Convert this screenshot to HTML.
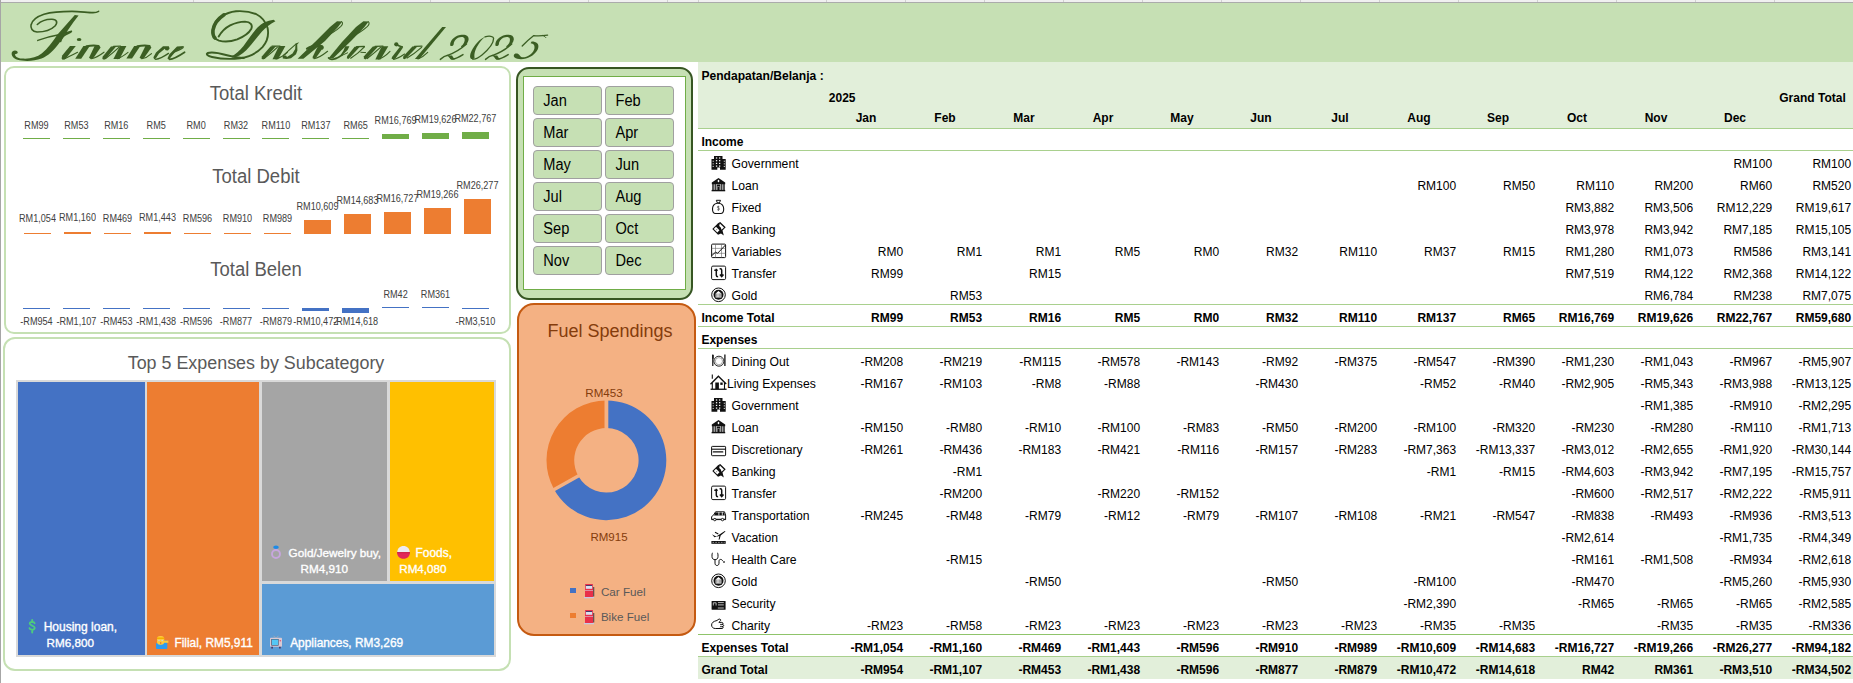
<!DOCTYPE html>
<html><head><meta charset="utf-8"><style>
html,body{margin:0;padding:0;background:#fff;}
body{width:1853px;height:683px;position:relative;overflow:hidden;font-family:"Liberation Sans", sans-serif;}
.t{position:absolute;white-space:nowrap;}
.r{position:absolute;box-sizing:border-box;}
svg{position:absolute;}
</style></head><body>
<div class="r" style="left:0px;top:0px;width:1853px;height:2px;background:#F0F0F0;"></div><div class="r" style="left:0px;top:2px;width:1853px;height:1px;background:#ABABAB;"></div><div class="r" style="left:193px;top:0px;width:1px;height:2px;background:#D0D0D0;"></div><div class="r" style="left:272px;top:0px;width:1px;height:2px;background:#D0D0D0;"></div><div class="r" style="left:351px;top:0px;width:1px;height:2px;background:#D0D0D0;"></div><div class="r" style="left:430px;top:0px;width:1px;height:2px;background:#D0D0D0;"></div><div class="r" style="left:509px;top:0px;width:1px;height:2px;background:#D0D0D0;"></div><div class="r" style="left:588px;top:0px;width:1px;height:2px;background:#D0D0D0;"></div><div class="r" style="left:667px;top:0px;width:1px;height:2px;background:#D0D0D0;"></div><div class="r" style="left:698px;top:0px;width:1px;height:2px;background:#D0D0D0;"></div><div class="r" style="left:826px;top:0px;width:1px;height:2px;background:#D0D0D0;"></div><div class="r" style="left:905px;top:0px;width:1px;height:2px;background:#D0D0D0;"></div><div class="r" style="left:984px;top:0px;width:1px;height:2px;background:#D0D0D0;"></div><div class="r" style="left:1063px;top:0px;width:1px;height:2px;background:#D0D0D0;"></div><div class="r" style="left:1142px;top:0px;width:1px;height:2px;background:#D0D0D0;"></div><div class="r" style="left:1221px;top:0px;width:1px;height:2px;background:#D0D0D0;"></div><div class="r" style="left:1300px;top:0px;width:1px;height:2px;background:#D0D0D0;"></div><div class="r" style="left:1379px;top:0px;width:1px;height:2px;background:#D0D0D0;"></div><div class="r" style="left:1458px;top:0px;width:1px;height:2px;background:#D0D0D0;"></div><div class="r" style="left:1537px;top:0px;width:1px;height:2px;background:#D0D0D0;"></div><div class="r" style="left:1616px;top:0px;width:1px;height:2px;background:#D0D0D0;"></div><div class="r" style="left:1695px;top:0px;width:1px;height:2px;background:#D0D0D0;"></div><div class="r" style="left:1774px;top:0px;width:1px;height:2px;background:#D0D0D0;"></div><div class="r" style="left:0px;top:0px;width:1px;height:683px;background:#A6A6A6;"></div><div class="r" style="left:1px;top:3px;width:1852px;height:59px;background:#C6E0B4;"></div><svg style="left:0;top:0" width="600" height="70" viewBox="0 0 600 70"><path d="M37.3 24.5C41 21 46 19 52 19.2C57 19.4 58 22.5 55 26C51 30 43 32 37 32C32 31.5 30.5 28 31 25C32 20 37 16.5 44 14.2C52 12 62 11.4 72 11.4C80 11.5 88 12.6 93 12.6C95.5 12.6 97.5 12 98.6 11.3" fill="none" stroke="#3B5E23" stroke-width="1.6" stroke-linecap="round" stroke-linejoin="round"/><path d="M74.8 15.0L78.6 15.4C72 23.5 66 33 60 42C54 50.5 48 56 41.5 58.6C34 61.3 24 61.5 17.5 59.8C13.3 58.6 11 55.6 11.8 52.6C12.5 50.3 15.8 49.8 17.4 51.4C18.4 52.6 17.2 54.2 15.2 54C14.5 56.2 17.2 58.2 22 58.6C30 59.2 36.5 57.5 42 53.3C47.5 49 52.5 42 57.5 34.6Z" fill="#3B5E23"/><path d="M37.8 40.4C44 38.3 52 36 60 34.6C65 33.6 69 31.5 71.3 31.2C72 31.6 70 33 66 34.5C63 36 61.5 38.5 60.6 41.5" fill="none" stroke="#3B5E23" stroke-width="1.5" stroke-linecap="round" stroke-linejoin="round"/><ellipse cx="79.1" cy="39.4" rx="2.3" ry="1.5" fill="#3B5E23"/><path d="M70 46.1 L75.8 46.1 L65.8 58.4 L64.4 59.6 L62.6 59.7 L61.6 58.4 L62.2 55.6Z" fill="#3B5E23"/><path d="M64.5 58.8C68 57.2 73 54.6 77.6 52.2" fill="none" stroke="#3B5E23" stroke-width="1.1" stroke-linecap="round" stroke-linejoin="round"/><path d="M83.4 46.1 L89.8 46.1 L81.2 58.7 L75.2 58.7Z" fill="#3B5E23"/><path d="M86.5 46.3C90 45.6 95 45.4 98.6 45.9" fill="none" stroke="#3B5E23" stroke-width="1.9" stroke-linecap="round" stroke-linejoin="round"/><path d="M94.6 46.0 L99.6 46.0 L100.6 47.4 L93.6 57.8 L90.8 59.0 L89.0 57.8Z" fill="#3B5E23"/><path d="M91.2 58.8C95 58 100 55.2 104 52.2" fill="none" stroke="#3B5E23" stroke-width="1.1" stroke-linecap="round" stroke-linejoin="round"/><path d="M111 46.4 L116.5 46.1 L106.2 58.2 L104.2 59.7 L102.4 59.0 L102.6 56.8Z" fill="#3B5E23"/><path d="M118.9 47.4C115 51 109.5 55.6 105.6 58.6" fill="none" stroke="#3B5E23" stroke-width="1.2" stroke-linecap="round" stroke-linejoin="round"/><path d="M113.5 46.3L120.5 46.2" fill="none" stroke="#3B5E23" stroke-width="1.3" stroke-linecap="round" stroke-linejoin="round"/><path d="M120 46.1 L126.4 46.1 L119.5 58.9 L113.4 58.9Z" fill="#3B5E23"/><path d="M117.5 58.7C121 57.6 124.5 55.2 128 52.4" fill="none" stroke="#3B5E23" stroke-width="1.1" stroke-linecap="round" stroke-linejoin="round"/><path d="M134.2 46.1 L140.3 46.1 L132 58.6 L126.4 58.6Z" fill="#3B5E23"/><path d="M137.4 46.3C141 45.6 146 45.4 149.6 45.9" fill="none" stroke="#3B5E23" stroke-width="1.9" stroke-linecap="round" stroke-linejoin="round"/><path d="M145.4 46.0 L150.4 46.0 L151.4 47.4 L144.2 57.8 L141.4 59.0 L139.6 57.8Z" fill="#3B5E23"/><path d="M141.8 58.8C145 58.2 148.5 56.4 151.5 53.6" fill="none" stroke="#3B5E23" stroke-width="1.1" stroke-linecap="round" stroke-linejoin="round"/><path d="M163 46.3 L168.8 46.2 L169.6 48.4 L168 50.4 L165.6 50.2 L164.8 48.8 L159 53.6 L155.8 58.6 L154.2 59.4 L153.4 57.2 L156 52.6Z" fill="#3B5E23"/><path d="M155.6 59.3C159 59 164 56.5 168.5 53.4" fill="none" stroke="#3B5E23" stroke-width="1.3" stroke-linecap="round" stroke-linejoin="round"/><path d="M177 46.5 L184.3 46.0 L182.6 47.6 L175.6 51.6 L170.6 57.6 L169.2 59.6 L167.4 58.4 L169.4 54.2Z" fill="#3B5E23"/><path d="M172.8 52.6C176.2 51.4 180.6 49.8 183.2 47.6" fill="none" stroke="#3B5E23" stroke-width="1.3" stroke-linecap="round" stroke-linejoin="round"/><path d="M169.4 59.3C173 59.2 179 56 184.6 52.2" fill="none" stroke="#3B5E23" stroke-width="1.7" stroke-linecap="round" stroke-linejoin="round"/><path d="M218.7 36.4C222 31 226 27.5 230.1 25.4C235 23 240.7 21.6 245 21.6C250.5 21.8 253 25 251.2 29C249 33 244 36.6 237.2 39.4C231 41.6 224 42 219 40.6C214.5 39 212.4 35.5 212.6 31.1C213 25.5 216.5 19.5 221.3 16.6C226 13.5 231 11.8 236 11.3C242 10.9 250 11.6 256 14C262 17 266 22.5 267.6 28C269 35 267 42 262.5 47.2C257 53 249 56.8 240 58.2C231 59.4 220 58.8 212 57C207.5 56 205.6 54 207.6 53C211 52 219 53 226 55C232 56.6 238 58 244 58" fill="none" stroke="#3B5E23" stroke-width="1.9" stroke-linecap="round" stroke-linejoin="round"/><path d="M224 14.8C218.5 18.5 214 24 213 30C212.6 34 213.4 36.5 215 38" fill="none" stroke="#3B5E23" stroke-width="3.6" stroke-linecap="round" stroke-linejoin="round"/><path d="M273.6 19.8L275.4 21.2C270 24 265.5 27.5 262 31.5C257 37.5 252 44 246.5 50C242 54.5 237 57.5 232.2 57.6L230.8 56.4C235 55 239.5 51 243.5 46C248 40 252.5 33 257.5 27.5C262 23 267 21 273.6 19.8Z" fill="#3B5E23"/><path d="M270.5 46.4 L276.2 46.1 L265.2 58.2 L263.2 59.6 L261.6 58.8 L261.8 56.4Z" fill="#3B5E23"/><path d="M277.3 47.4C273 51.5 268 55.6 264.4 58.4" fill="none" stroke="#3B5E23" stroke-width="1.2" stroke-linecap="round" stroke-linejoin="round"/><path d="M272 46.2L280 46.1" fill="none" stroke="#3B5E23" stroke-width="1.3" stroke-linecap="round" stroke-linejoin="round"/><path d="M279 46.1 L285.4 46.1 L278 59.3 L272.5 59.3Z" fill="#3B5E23"/><path d="M276 59C280 58 284 55.5 287.4 52.4" fill="none" stroke="#3B5E23" stroke-width="1.1" stroke-linecap="round" stroke-linejoin="round"/><path d="M295.5 43.6 L299.2 42.2 L297.2 44.6 L297.4 50.5 L296 54.2 L291 58.2 L286.5 59 L282.8 58.6 L282.6 56 L286 55.4 L287 57 L292.5 53.6 L295.2 49Z" fill="#3B5E23"/><path d="M283.5 55.5C287 52 292 47.5 295.6 44.4" fill="none" stroke="#3B5E23" stroke-width="1.1" stroke-linecap="round" stroke-linejoin="round"/><path d="M337 21.2 L342.2 21.4 L338 27 L325 41 L303.4 58.8 L297.6 58.8 L315 42 L330 27Z" fill="#3B5E23"/><path d="M341.6 21.6C343.2 22.8 342.6 24.6 340.6 26.6C336 31 328 35.5 321 38.1" fill="none" stroke="#3B5E23" stroke-width="1.1" stroke-linecap="round" stroke-linejoin="round"/><path d="M307 48.6C310.5 46.5 316 45.4 320.5 45.8C323 46.2 323.2 47.4 322.2 48.6" fill="none" stroke="#3B5E23" stroke-width="2.2" stroke-linecap="round" stroke-linejoin="round"/><path d="M318 46 L322.8 46.2 L323.2 47.6 L316.4 57.2 L314.6 58.8 L312.6 58.2 L312.8 56.4Z" fill="#3B5E23"/><path d="M314 58.7C318 58.2 323 55 327.6 51.3" fill="none" stroke="#3B5E23" stroke-width="1.1" stroke-linecap="round" stroke-linejoin="round"/><path d="M363.4 21.2 L368.6 21.4 L364.5 27 L351 41 L333.2 58.2 L328.4 58.6 L342 42 L356 27Z" fill="#3B5E23"/><path d="M368.2 21.6C369.8 22.8 369.2 24.6 367.2 26.6C362.5 31 355 35.5 347 39.5" fill="none" stroke="#3B5E23" stroke-width="1.1" stroke-linecap="round" stroke-linejoin="round"/><path d="M328.6 58C330 59.6 333 59.6 336 58.4" fill="none" stroke="#3B5E23" stroke-width="1.8" stroke-linecap="round" stroke-linejoin="round"/><path d="M345.2 46.2 L349.4 46.2 L347.6 50 L342 55.6 L340.6 55 L343.5 50.5Z" fill="#3B5E23"/><path d="M336 58.4C338.5 57.4 340.6 56 342 55" fill="none" stroke="#3B5E23" stroke-width="1.6" stroke-linecap="round" stroke-linejoin="round"/><path d="M342.4 55.2L347.6 52.8" fill="none" stroke="#3B5E23" stroke-width="1.0" stroke-linecap="round" stroke-linejoin="round"/><path d="M354.6 46.8 L360 46.4 L350 57.6 L348.4 59.0 L346.8 58.2 L347.2 56Z" fill="#3B5E23"/><path d="M356.6 46.6L364.3 46.5" fill="none" stroke="#3B5E23" stroke-width="1.4" stroke-linecap="round" stroke-linejoin="round"/><path d="M364.4 46.8C361 50.5 355 55.5 350.7 58.2" fill="none" stroke="#3B5E23" stroke-width="1.2" stroke-linecap="round" stroke-linejoin="round"/><path d="M360.8 52.3L365.6 52.6" fill="none" stroke="#3B5E23" stroke-width="1.0" stroke-linecap="round" stroke-linejoin="round"/><path d="M372.8 46.6 L378.4 46.2 L367.2 58.2 L365.4 59.4 L363.8 58.6 L364.0 56.2Z" fill="#3B5E23"/><path d="M380.5 47.4C376 51.5 371 55.6 367.2 58.5" fill="none" stroke="#3B5E23" stroke-width="1.2" stroke-linecap="round" stroke-linejoin="round"/><path d="M375 46.3L383 46.2" fill="none" stroke="#3B5E23" stroke-width="1.3" stroke-linecap="round" stroke-linejoin="round"/><path d="M381.8 46.2 L388.3 46.2 L380.5 59.4 L375.3 59.4Z" fill="#3B5E23"/><path d="M378.5 59C382 58 386.5 55 390 51.3" fill="none" stroke="#3B5E23" stroke-width="1.1" stroke-linecap="round" stroke-linejoin="round"/><circle cx="396.3" cy="44.3" r="2.1" fill="#3B5E23"/><path d="M396.5 44.8C398.5 46 400.5 46.4 402.2 46.8" fill="none" stroke="#3B5E23" stroke-width="1.6" stroke-linecap="round" stroke-linejoin="round"/><path d="M399.8 47.0 L403.2 47.2 L395.6 58.2 L393.6 59.6 L391.6 58.8 L392.0 57.0Z" fill="#3B5E23"/><path d="M393.6 59.4C397 58.8 401 56.5 404.6 54" fill="none" stroke="#3B5E23" stroke-width="1.1" stroke-linecap="round" stroke-linejoin="round"/><path d="M412.4 46.6 L417.6 46.2 L406.4 58.0 L404.6 59.2 L403.0 58.4 L403.4 56.2Z" fill="#3B5E23"/><path d="M421.6 47.4C417 51.5 411.5 55.5 407.1 58" fill="none" stroke="#3B5E23" stroke-width="1.2" stroke-linecap="round" stroke-linejoin="round"/><path d="M414.5 46.4L422 46.2" fill="none" stroke="#3B5E23" stroke-width="1.3" stroke-linecap="round" stroke-linejoin="round"/><path d="M442.2 27.1 L446 27.1 L419.4 59.1 L414.9 59.1Z" fill="#3B5E23"/><path d="M418 59C421 58 424.5 55.6 427.7 52.4" fill="none" stroke="#3B5E23" stroke-width="1.1" stroke-linecap="round" stroke-linejoin="round"/><path d="M450.2 45.6C449.6 41 454 36.2 460 35C465.5 34 469 35.6 468.6 39.5C468.2 43 465 46.2 461.5 47.2L461 46.2C463.6 44.6 465.2 41.5 464.6 38.8C464 36.6 461 36.4 458 37.8C455.5 39 453.8 41.5 453.6 44.6C453.6 46 451.2 46.6 450.2 45.6Z" fill="#3B5E23"/><path d="M466.5 44C461 49 453 53.5 447 55.6" fill="none" stroke="#3B5E23" stroke-width="1.5" stroke-linecap="round" stroke-linejoin="round"/><path d="M440.3 59.4C442.5 57.5 445 55.8 447.2 55.4C449 55.2 449.6 57 451 58.6C453 59.6 457 58.4 463 54.6" fill="none" stroke="#3B5E23" stroke-width="1.4" stroke-linecap="round" stroke-linejoin="round"/><path d="M448.8 55.6L452 55.4L454.6 59.4L451 59.6Z" fill="#3B5E23"/><path d="M485.8 36.6C480 38.5 474.5 45 471.5 51C469.6 55 469.6 58.4 471.6 59.1C473 59.5 474.4 58.6 474.6 57.6C473.8 54 475.5 48.5 479 43.5C481.5 40 484 37.8 485.8 36.6Z" fill="#3B5E23"/><path d="M485 36.8C489 35.6 493.6 36 493.6 38.6C493.6 43 488 50 482 55C478 58.2 474.6 59.4 472.6 59" fill="none" stroke="#3B5E23" stroke-width="1.3" stroke-linecap="round" stroke-linejoin="round"/><path d="M495.4 45.6C494.8 41 499.2 36.2 505.2 35C510.7 34 514.2 35.6 513.8000000000001 39.5C513.4 43 510.2 46.2 506.7 47.2L506.2 46.2C508.8 44.6 510.4 41.5 509.8 38.8C509.2 36.6 506.2 36.4 503.2 37.8C500.7 39 499.0 41.5 498.8 44.6C498.8 46 496.4 46.6 495.4 45.6Z" fill="#3B5E23"/><path d="M511.7 44C506.2 49 498.2 53.5 492.2 55.6" fill="none" stroke="#3B5E23" stroke-width="1.5" stroke-linecap="round" stroke-linejoin="round"/><path d="M485.5 59.4C487.7 57.5 490.2 55.8 492.4 55.4C494.2 55.2 494.8 57 496.2 58.6C498.2 59.6 502.2 58.4 508.2 54.6" fill="none" stroke="#3B5E23" stroke-width="1.4" stroke-linecap="round" stroke-linejoin="round"/><path d="M494.0 55.6L497.2 55.4L499.8 59.4L496.2 59.6Z" fill="#3B5E23"/><path d="M522.2 46C525.5 42.5 530 38.6 533.8 35.6C538 36.2 543 35.8 547.6 35.2" fill="none" stroke="#3B5E23" stroke-width="1.3" stroke-linecap="round" stroke-linejoin="round"/><path d="M543 35.5C544.6 36.2 545.6 37 545.8 37.6" fill="none" stroke="#3B5E23" stroke-width="1.0" stroke-linecap="round" stroke-linejoin="round"/><path d="M531.6 41.6C536.6 41.6 539.2 44 538.2 48C537 52.5 532 56.8 526 58.6C521.5 59.8 517 59.4 514.6 57.6C513.2 56.4 513.6 54.2 515.4 53.6C517 53.1 518.6 53.8 519.6 55.2C520.4 56.6 521.6 57.6 524.5 57.2C529.5 56.2 533.5 52.5 534.4 48.5C535 45.4 533.6 43.4 530.6 43.2Z" fill="#3B5E23"/></svg><div class="r" style="left:698px;top:62px;width:1155px;height:66px;background:#E2EFDA;"></div><div class="r" style="left:4px;top:66px;width:507px;height:268px;background:#fff;border:2px solid #C5E0B3;border-radius:10px;"></div><div class="t" style="left:106.00px;width:300.00px;text-align:center;top:84px;font-size:18.5px;line-height:20px;color:#595959;font-weight:normal;transform:scaleY(1.07);transform-origin:50% 16px;">Total Kredit</div><div class="t" style="left:106.00px;width:300.00px;text-align:center;top:167px;font-size:18.5px;line-height:20px;color:#595959;font-weight:normal;transform:scaleY(1.07);transform-origin:50% 16px;">Total Debit</div><div class="t" style="left:106.00px;width:300.00px;text-align:center;top:260px;font-size:18.5px;line-height:20px;color:#595959;font-weight:normal;transform:scaleY(1.07);transform-origin:50% 16px;">Total Belen</div><div class="r" style="left:23.0px;top:137.5px;width:27px;height:1.5px;background:#70AD47;"></div><div class="t" style="left:6.50px;width:60.00px;text-align:center;top:116px;font-size:9.1px;line-height:20px;color:#404040;font-weight:normal;transform:scaleY(1.1);transform-origin:50% 13px;">RM99</div><div class="r" style="left:62.9px;top:137.5px;width:27px;height:1.5px;background:#70AD47;"></div><div class="t" style="left:46.40px;width:60.00px;text-align:center;top:116px;font-size:9.1px;line-height:20px;color:#404040;font-weight:normal;transform:scaleY(1.1);transform-origin:50% 13px;">RM53</div><div class="r" style="left:102.8px;top:137.5px;width:27px;height:1.5px;background:#70AD47;"></div><div class="t" style="left:86.30px;width:60.00px;text-align:center;top:116px;font-size:9.1px;line-height:20px;color:#404040;font-weight:normal;transform:scaleY(1.1);transform-origin:50% 13px;">RM16</div><div class="r" style="left:142.7px;top:137.5px;width:27px;height:1.5px;background:#70AD47;"></div><div class="t" style="left:126.20px;width:60.00px;text-align:center;top:116px;font-size:9.1px;line-height:20px;color:#404040;font-weight:normal;transform:scaleY(1.1);transform-origin:50% 13px;">RM5</div><div class="r" style="left:182.6px;top:137.5px;width:27px;height:1.5px;background:#70AD47;"></div><div class="t" style="left:166.10px;width:60.00px;text-align:center;top:116px;font-size:9.1px;line-height:20px;color:#404040;font-weight:normal;transform:scaleY(1.1);transform-origin:50% 13px;">RM0</div><div class="r" style="left:222.5px;top:137.5px;width:27px;height:1.5px;background:#70AD47;"></div><div class="t" style="left:206.00px;width:60.00px;text-align:center;top:116px;font-size:9.1px;line-height:20px;color:#404040;font-weight:normal;transform:scaleY(1.1);transform-origin:50% 13px;">RM32</div><div class="r" style="left:262.4px;top:137.5px;width:27px;height:1.5px;background:#70AD47;"></div><div class="t" style="left:245.90px;width:60.00px;text-align:center;top:116px;font-size:9.1px;line-height:20px;color:#404040;font-weight:normal;transform:scaleY(1.1);transform-origin:50% 13px;">RM110</div><div class="r" style="left:302.3px;top:137.5px;width:27px;height:1.5px;background:#70AD47;"></div><div class="t" style="left:285.80px;width:60.00px;text-align:center;top:116px;font-size:9.1px;line-height:20px;color:#404040;font-weight:normal;transform:scaleY(1.1);transform-origin:50% 13px;">RM137</div><div class="r" style="left:342.2px;top:137.5px;width:27px;height:1.5px;background:#70AD47;"></div><div class="t" style="left:325.70px;width:60.00px;text-align:center;top:116px;font-size:9.1px;line-height:20px;color:#404040;font-weight:normal;transform:scaleY(1.1);transform-origin:50% 13px;">RM65</div><div class="r" style="left:382.1px;top:133.8px;width:27px;height:5.2px;background:#70AD47;"></div><div class="t" style="left:365.60px;width:60.00px;text-align:center;top:111px;font-size:9.1px;line-height:20px;color:#404040;font-weight:normal;transform:scaleY(1.1);transform-origin:50% 13px;">RM16,769</div><div class="r" style="left:422.0px;top:132.8px;width:27px;height:6.2px;background:#70AD47;"></div><div class="t" style="left:405.50px;width:60.00px;text-align:center;top:110px;font-size:9.1px;line-height:20px;color:#404040;font-weight:normal;transform:scaleY(1.1);transform-origin:50% 13px;">RM19,626</div><div class="r" style="left:461.9px;top:131.8px;width:27px;height:7.2px;background:#70AD47;"></div><div class="t" style="left:445.40px;width:60.00px;text-align:center;top:109px;font-size:9.1px;line-height:20px;color:#404040;font-weight:normal;transform:scaleY(1.1);transform-origin:50% 13px;">RM22,767</div><div class="r" style="left:24px;top:232.6px;width:27px;height:1.4px;background:#ED7D31;"></div><div class="t" style="left:7.50px;width:60.00px;text-align:center;top:209px;font-size:9.1px;line-height:20px;color:#404040;font-weight:normal;transform:scaleY(1.1);transform-origin:50% 13px;">RM1,054</div><div class="r" style="left:64px;top:231.6px;width:27px;height:2.4px;background:#ED7D31;"></div><div class="t" style="left:47.50px;width:60.00px;text-align:center;top:208px;font-size:9.1px;line-height:20px;color:#404040;font-weight:normal;transform:scaleY(1.1);transform-origin:50% 13px;">RM1,160</div><div class="r" style="left:104px;top:232.8px;width:27px;height:1.2px;background:#ED7D31;"></div><div class="t" style="left:87.50px;width:60.00px;text-align:center;top:209px;font-size:9.1px;line-height:20px;color:#404040;font-weight:normal;transform:scaleY(1.1);transform-origin:50% 13px;">RM469</div><div class="r" style="left:144px;top:231.6px;width:27px;height:2.4px;background:#ED7D31;"></div><div class="t" style="left:127.50px;width:60.00px;text-align:center;top:208px;font-size:9.1px;line-height:20px;color:#404040;font-weight:normal;transform:scaleY(1.1);transform-origin:50% 13px;">RM1,443</div><div class="r" style="left:184px;top:232.8px;width:27px;height:1.2px;background:#ED7D31;"></div><div class="t" style="left:167.50px;width:60.00px;text-align:center;top:209px;font-size:9.1px;line-height:20px;color:#404040;font-weight:normal;transform:scaleY(1.1);transform-origin:50% 13px;">RM596</div><div class="r" style="left:224px;top:232.8px;width:27px;height:1.2px;background:#ED7D31;"></div><div class="t" style="left:207.50px;width:60.00px;text-align:center;top:209px;font-size:9.1px;line-height:20px;color:#404040;font-weight:normal;transform:scaleY(1.1);transform-origin:50% 13px;">RM910</div><div class="r" style="left:264px;top:232.8px;width:27px;height:1.2px;background:#ED7D31;"></div><div class="t" style="left:247.50px;width:60.00px;text-align:center;top:209px;font-size:9.1px;line-height:20px;color:#404040;font-weight:normal;transform:scaleY(1.1);transform-origin:50% 13px;">RM989</div><div class="r" style="left:304px;top:220px;width:27px;height:14px;background:#ED7D31;"></div><div class="t" style="left:287.50px;width:60.00px;text-align:center;top:197px;font-size:9.1px;line-height:20px;color:#404040;font-weight:normal;transform:scaleY(1.1);transform-origin:50% 13px;">RM10,609</div><div class="r" style="left:344px;top:214px;width:27px;height:20px;background:#ED7D31;"></div><div class="t" style="left:327.50px;width:60.00px;text-align:center;top:191px;font-size:9.1px;line-height:20px;color:#404040;font-weight:normal;transform:scaleY(1.1);transform-origin:50% 13px;">RM14,683</div><div class="r" style="left:384px;top:212px;width:27px;height:22px;background:#ED7D31;"></div><div class="t" style="left:367.50px;width:60.00px;text-align:center;top:189px;font-size:9.1px;line-height:20px;color:#404040;font-weight:normal;transform:scaleY(1.1);transform-origin:50% 13px;">RM16,727</div><div class="r" style="left:424px;top:208px;width:27px;height:26px;background:#ED7D31;"></div><div class="t" style="left:407.50px;width:60.00px;text-align:center;top:185px;font-size:9.1px;line-height:20px;color:#404040;font-weight:normal;transform:scaleY(1.1);transform-origin:50% 13px;">RM19,266</div><div class="r" style="left:464px;top:199px;width:27px;height:35px;background:#ED7D31;"></div><div class="t" style="left:447.50px;width:60.00px;text-align:center;top:176px;font-size:9.1px;line-height:20px;color:#404040;font-weight:normal;transform:scaleY(1.1);transform-origin:50% 13px;">RM26,277</div><div class="r" style="left:23.0px;top:307.5px;width:27px;height:1.5px;background:#4472C4;"></div><div class="t" style="left:6.50px;width:60.00px;text-align:center;top:312px;font-size:9.1px;line-height:20px;color:#404040;font-weight:normal;transform:scaleY(1.1);transform-origin:50% 13px;">-RM954</div><div class="r" style="left:62.9px;top:307.5px;width:27px;height:1.5px;background:#4472C4;"></div><div class="t" style="left:46.40px;width:60.00px;text-align:center;top:312px;font-size:9.1px;line-height:20px;color:#404040;font-weight:normal;transform:scaleY(1.1);transform-origin:50% 13px;">-RM1,107</div><div class="r" style="left:102.8px;top:307.5px;width:27px;height:1.5px;background:#4472C4;"></div><div class="t" style="left:86.30px;width:60.00px;text-align:center;top:312px;font-size:9.1px;line-height:20px;color:#404040;font-weight:normal;transform:scaleY(1.1);transform-origin:50% 13px;">-RM453</div><div class="r" style="left:142.7px;top:307.5px;width:27px;height:1.5px;background:#4472C4;"></div><div class="t" style="left:126.20px;width:60.00px;text-align:center;top:312px;font-size:9.1px;line-height:20px;color:#404040;font-weight:normal;transform:scaleY(1.1);transform-origin:50% 13px;">-RM1,438</div><div class="r" style="left:182.6px;top:307.5px;width:27px;height:1.5px;background:#4472C4;"></div><div class="t" style="left:166.10px;width:60.00px;text-align:center;top:312px;font-size:9.1px;line-height:20px;color:#404040;font-weight:normal;transform:scaleY(1.1);transform-origin:50% 13px;">-RM596</div><div class="r" style="left:222.5px;top:307.5px;width:27px;height:1.5px;background:#4472C4;"></div><div class="t" style="left:206.00px;width:60.00px;text-align:center;top:312px;font-size:9.1px;line-height:20px;color:#404040;font-weight:normal;transform:scaleY(1.1);transform-origin:50% 13px;">-RM877</div><div class="r" style="left:262.4px;top:307.5px;width:27px;height:1.5px;background:#4472C4;"></div><div class="t" style="left:245.90px;width:60.00px;text-align:center;top:312px;font-size:9.1px;line-height:20px;color:#404040;font-weight:normal;transform:scaleY(1.1);transform-origin:50% 13px;">-RM879</div><div class="r" style="left:302.3px;top:308px;width:27px;height:2.8px;background:#4472C4;"></div><div class="t" style="left:285.80px;width:60.00px;text-align:center;top:312px;font-size:9.1px;line-height:20px;color:#404040;font-weight:normal;transform:scaleY(1.1);transform-origin:50% 13px;">-RM10,472</div><div class="r" style="left:342.2px;top:308px;width:27px;height:4.7px;background:#4472C4;"></div><div class="t" style="left:325.70px;width:60.00px;text-align:center;top:312px;font-size:9.1px;line-height:20px;color:#404040;font-weight:normal;transform:scaleY(1.1);transform-origin:50% 13px;">-RM14,618</div><div class="r" style="left:382.1px;top:306.5px;width:27px;height:1.5px;background:#4472C4;"></div><div class="t" style="left:365.60px;width:60.00px;text-align:center;top:285px;font-size:9.1px;line-height:20px;color:#404040;font-weight:normal;transform:scaleY(1.1);transform-origin:50% 13px;">RM42</div><div class="r" style="left:422.0px;top:306.5px;width:27px;height:1.5px;background:#4472C4;"></div><div class="t" style="left:405.50px;width:60.00px;text-align:center;top:285px;font-size:9.1px;line-height:20px;color:#404040;font-weight:normal;transform:scaleY(1.1);transform-origin:50% 13px;">RM361</div><div class="r" style="left:461.9px;top:307.5px;width:27px;height:1.5px;background:#4472C4;"></div><div class="t" style="left:445.40px;width:60.00px;text-align:center;top:312px;font-size:9.1px;line-height:20px;color:#404040;font-weight:normal;transform:scaleY(1.1);transform-origin:50% 13px;">-RM3,510</div><div class="r" style="left:3px;top:337px;width:508px;height:334px;background:#fff;border:2px solid #C5E0B3;border-radius:12px;"></div><div class="t" style="left:106.00px;width:300.00px;text-align:center;top:353px;font-size:17.9px;line-height:20px;color:#595959;font-weight:normal;transform:scaleY(1.07);transform-origin:50% 16px;">Top 5 Expenses by Subcategory</div><div class="r" style="left:16px;top:380px;width:480px;height:277px;background:#D9D9D9;"></div><div class="r" style="left:18px;top:382px;width:127px;height:273px;background:#4472C4;"></div><div class="r" style="left:147px;top:382px;width:112px;height:273px;background:#ED7D31;"></div><div class="r" style="left:262px;top:382px;width:125px;height:199px;background:#A5A5A5;"></div><div class="r" style="left:390px;top:382px;width:104px;height:199px;background:#FFC000;"></div><div class="r" style="left:262px;top:584px;width:232px;height:71px;background:#5B9BD5;"></div><div class="t" style="left:43.70px;top:617px;font-size:12px;line-height:20px;color:#fff;font-weight:normal;-webkit-text-stroke:0.35px #fff;">Housing loan,</div><div class="t" style="left:46.50px;top:633px;font-size:11.7px;line-height:20px;color:#fff;font-weight:normal;-webkit-text-stroke:0.35px #fff;">RM6,800</div><div class="t" style="left:174.40px;top:633px;font-size:11.9px;line-height:20px;color:#fff;font-weight:normal;-webkit-text-stroke:0.35px #fff;">Filial, RM5,911</div><div class="t" style="left:288.60px;top:543px;font-size:11.75px;line-height:20px;color:#fff;font-weight:normal;-webkit-text-stroke:0.35px #fff;">Gold/Jewelry buy,</div><div class="t" style="left:300.50px;top:559px;font-size:11.7px;line-height:20px;color:#fff;font-weight:normal;-webkit-text-stroke:0.35px #fff;">RM4,910</div><div class="t" style="left:415.60px;top:543px;font-size:11.9px;line-height:20px;color:#fff;font-weight:normal;-webkit-text-stroke:0.35px #fff;">Foods,</div><div class="t" style="left:399.20px;top:559px;font-size:11.7px;line-height:20px;color:#fff;font-weight:normal;-webkit-text-stroke:0.35px #fff;">RM4,080</div><div class="t" style="left:290.20px;top:633px;font-size:11.9px;line-height:20px;color:#fff;font-weight:normal;-webkit-text-stroke:0.35px #fff;">Appliances, RM3,269</div><div class="r" style="left:516px;top:67px;width:177px;height:233px;background:#C6E0B4;border:2px solid #375623;border-radius:13px;"></div><div class="r" style="left:523px;top:76px;width:163px;height:214px;background:#fff;border:1px solid #70AD47;"></div><div class="r" style="left:533.0px;top:86.0px;width:69px;height:29px;background:#C6E0B4;border:1px solid #A0A0A0;border-radius:4px;"></div><div class="t" style="left:543.30px;top:91px;font-size:14.6px;line-height:20px;color:#000;font-weight:normal;transform:scaleY(1.08);transform-origin:50% 15px;">Jan</div><div class="r" style="left:605.2px;top:86.0px;width:69px;height:29px;background:#C6E0B4;border:1px solid #A0A0A0;border-radius:4px;"></div><div class="t" style="left:615.50px;top:91px;font-size:14.6px;line-height:20px;color:#000;font-weight:normal;transform:scaleY(1.08);transform-origin:50% 15px;">Feb</div><div class="r" style="left:533.0px;top:118.0px;width:69px;height:29px;background:#C6E0B4;border:1px solid #A0A0A0;border-radius:4px;"></div><div class="t" style="left:543.30px;top:123px;font-size:14.6px;line-height:20px;color:#000;font-weight:normal;transform:scaleY(1.08);transform-origin:50% 15px;">Mar</div><div class="r" style="left:605.2px;top:118.0px;width:69px;height:29px;background:#C6E0B4;border:1px solid #A0A0A0;border-radius:4px;"></div><div class="t" style="left:615.50px;top:123px;font-size:14.6px;line-height:20px;color:#000;font-weight:normal;transform:scaleY(1.08);transform-origin:50% 15px;">Apr</div><div class="r" style="left:533.0px;top:150.1px;width:69px;height:29px;background:#C6E0B4;border:1px solid #A0A0A0;border-radius:4px;"></div><div class="t" style="left:543.30px;top:155px;font-size:14.6px;line-height:20px;color:#000;font-weight:normal;transform:scaleY(1.08);transform-origin:50% 15px;">May</div><div class="r" style="left:605.2px;top:150.1px;width:69px;height:29px;background:#C6E0B4;border:1px solid #A0A0A0;border-radius:4px;"></div><div class="t" style="left:615.50px;top:155px;font-size:14.6px;line-height:20px;color:#000;font-weight:normal;transform:scaleY(1.08);transform-origin:50% 15px;">Jun</div><div class="r" style="left:533.0px;top:182.1px;width:69px;height:29px;background:#C6E0B4;border:1px solid #A0A0A0;border-radius:4px;"></div><div class="t" style="left:543.30px;top:187px;font-size:14.6px;line-height:20px;color:#000;font-weight:normal;transform:scaleY(1.08);transform-origin:50% 15px;">Jul</div><div class="r" style="left:605.2px;top:182.1px;width:69px;height:29px;background:#C6E0B4;border:1px solid #A0A0A0;border-radius:4px;"></div><div class="t" style="left:615.50px;top:187px;font-size:14.6px;line-height:20px;color:#000;font-weight:normal;transform:scaleY(1.08);transform-origin:50% 15px;">Aug</div><div class="r" style="left:533.0px;top:214.2px;width:69px;height:29px;background:#C6E0B4;border:1px solid #A0A0A0;border-radius:4px;"></div><div class="t" style="left:543.30px;top:219px;font-size:14.6px;line-height:20px;color:#000;font-weight:normal;transform:scaleY(1.08);transform-origin:50% 15px;">Sep</div><div class="r" style="left:605.2px;top:214.2px;width:69px;height:29px;background:#C6E0B4;border:1px solid #A0A0A0;border-radius:4px;"></div><div class="t" style="left:615.50px;top:219px;font-size:14.6px;line-height:20px;color:#000;font-weight:normal;transform:scaleY(1.08);transform-origin:50% 15px;">Oct</div><div class="r" style="left:533.0px;top:246.2px;width:69px;height:29px;background:#C6E0B4;border:1px solid #A0A0A0;border-radius:4px;"></div><div class="t" style="left:543.30px;top:251px;font-size:14.6px;line-height:20px;color:#000;font-weight:normal;transform:scaleY(1.08);transform-origin:50% 15px;">Nov</div><div class="r" style="left:605.2px;top:246.2px;width:69px;height:29px;background:#C6E0B4;border:1px solid #A0A0A0;border-radius:4px;"></div><div class="t" style="left:615.50px;top:251px;font-size:14.6px;line-height:20px;color:#000;font-weight:normal;transform:scaleY(1.08);transform-origin:50% 15px;">Dec</div><div class="r" style="left:517px;top:303px;width:179px;height:333px;background:#F4B183;border:2px solid #C55A11;border-radius:17px;"></div><div class="t" style="left:460.00px;width:300.00px;text-align:center;top:321px;font-size:18px;line-height:20px;color:#843C0C;font-weight:normal;transform:scaleY(1.07);transform-origin:50% 16px;">Fuel Spendings</div><div class="t" style="left:454.00px;width:300.00px;text-align:center;top:383px;font-size:11.6px;line-height:20px;color:#843C0C;font-weight:normal;">RM453</div><div class="t" style="left:459.00px;width:300.00px;text-align:center;top:527px;font-size:11.5px;line-height:20px;color:#843C0C;font-weight:normal;">RM915</div><div class="r" style="left:570px;top:588px;width:6px;height:5px;background:#4472C4;"></div><div class="r" style="left:570px;top:613px;width:6px;height:5px;background:#ED7D31;"></div><div class="t" style="left:600.90px;top:582px;font-size:11.7px;line-height:20px;color:#595959;font-weight:normal;">Car Fuel</div><div class="t" style="left:600.90px;top:607px;font-size:11.6px;line-height:20px;color:#595959;font-weight:normal;">Bike Fuel</div><svg style="left:0;top:0" width="1853" height="683" viewBox="0 0 1853 683"><path d="M606.40 400.40 A59.9 59.9 0 1 1 554.12 489.53 L578.29 476.01 A32.2 32.2 0 1 0 606.40 428.10 Z" fill="#4472C4"/><path d="M554.12 489.53 A59.9 59.9 0 0 1 606.40 400.40 L606.40 428.10 A32.2 32.2 0 0 0 578.29 476.01 Z" fill="#ED7D31"/><path d="M606.40 430.10 L606.40 398.40" stroke="#F4B183" stroke-width="3.8"/><path d="M580.04 475.04 L552.37 490.51" stroke="#F4B183" stroke-width="3.4"/></svg><div class="t" style="left:701.40px;top:66px;font-size:12.1px;line-height:20px;color:#000;font-weight:bold;">Pendapatan/Belanja :</div><div class="t" style="left:828.80px;top:88px;font-size:12px;line-height:20px;color:#000;font-weight:bold;">2025</div><div class="t" style="left:826.50px;width:79.00px;text-align:center;top:108px;font-size:12px;line-height:20px;color:#000;font-weight:bold;">Jan</div><div class="t" style="left:905.50px;width:79.00px;text-align:center;top:108px;font-size:12px;line-height:20px;color:#000;font-weight:bold;">Feb</div><div class="t" style="left:984.50px;width:79.00px;text-align:center;top:108px;font-size:12px;line-height:20px;color:#000;font-weight:bold;">Mar</div><div class="t" style="left:1063.50px;width:79.00px;text-align:center;top:108px;font-size:12px;line-height:20px;color:#000;font-weight:bold;">Apr</div><div class="t" style="left:1142.50px;width:79.00px;text-align:center;top:108px;font-size:12px;line-height:20px;color:#000;font-weight:bold;">May</div><div class="t" style="left:1221.50px;width:79.00px;text-align:center;top:108px;font-size:12px;line-height:20px;color:#000;font-weight:bold;">Jun</div><div class="t" style="left:1300.50px;width:79.00px;text-align:center;top:108px;font-size:12px;line-height:20px;color:#000;font-weight:bold;">Jul</div><div class="t" style="left:1379.50px;width:79.00px;text-align:center;top:108px;font-size:12px;line-height:20px;color:#000;font-weight:bold;">Aug</div><div class="t" style="left:1458.50px;width:79.00px;text-align:center;top:108px;font-size:12px;line-height:20px;color:#000;font-weight:bold;">Sep</div><div class="t" style="left:1537.50px;width:79.00px;text-align:center;top:108px;font-size:12px;line-height:20px;color:#000;font-weight:bold;">Oct</div><div class="t" style="left:1616.50px;width:79.00px;text-align:center;top:108px;font-size:12px;line-height:20px;color:#000;font-weight:bold;">Nov</div><div class="t" style="left:1695.50px;width:79.00px;text-align:center;top:108px;font-size:12px;line-height:20px;color:#000;font-weight:bold;">Dec</div><div class="t" style="left:1773.00px;width:79.00px;text-align:center;top:88px;font-size:12px;line-height:20px;color:#000;font-weight:bold;">Grand Total</div><div class="r" style="left:698px;top:656px;width:1155px;height:23px;background:#E2EFDA;"></div><div class="r" style="left:698px;top:128px;width:1155px;height:1px;background:#A9D08E;"></div><div class="r" style="left:698px;top:150px;width:1155px;height:1px;background:#A9D08E;"></div><div class="r" style="left:698px;top:304px;width:1155px;height:1px;background:#A9D08E;"></div><div class="r" style="left:698px;top:326px;width:1155px;height:1px;background:#A9D08E;"></div><div class="r" style="left:698px;top:348px;width:1155px;height:1px;background:#A9D08E;"></div><div class="r" style="left:698px;top:634px;width:1155px;height:1px;background:#8FC46A;"></div><div class="r" style="left:698px;top:656px;width:1155px;height:1px;background:#A9D08E;"></div><div class="t" style="left:701.40px;top:132px;font-size:12px;line-height:20px;color:#000;font-weight:bold;">Income</div><div class="t" style="left:731.50px;top:154px;font-size:12.2px;line-height:20px;color:#000;font-weight:normal;">Government</div><svg style="left:708px;top:152px" width="22" height="22" viewBox="0 0 22 22"><path d="M6 4H14.5V7H17.7V17.7H12V15.5H9.3V17.7H3.5V7H6Z" fill="#111"/><rect x="7.9" y="5.4" width="1.3" height="1.2" fill="#fff"/><rect x="7.9" y="8.1" width="1.3" height="1.2" fill="#fff"/><rect x="7.9" y="10.8" width="1.3" height="1.2" fill="#fff"/><rect x="7.9" y="13.5" width="1.3" height="1.2" fill="#fff"/><rect x="11" y="5.4" width="1.3" height="1.2" fill="#fff"/><rect x="11" y="8.1" width="1.3" height="1.2" fill="#fff"/><rect x="11" y="10.8" width="1.3" height="1.2" fill="#fff"/><rect x="11" y="13.5" width="1.3" height="1.2" fill="#fff"/><rect x="4.7" y="8.7" width="0.9" height="1.1" fill="#fff"/><rect x="4.7" y="11.3" width="0.9" height="1.1" fill="#fff"/><rect x="4.7" y="13.9" width="0.9" height="1.1" fill="#fff"/><rect x="15.8" y="8.7" width="0.9" height="1.1" fill="#fff"/><rect x="15.8" y="11.3" width="0.9" height="1.1" fill="#fff"/><rect x="15.8" y="13.9" width="0.9" height="1.1" fill="#fff"/></svg><div class="t" style="left:1693.10px;width:79.00px;text-align:right;top:154px;font-size:12px;line-height:20px;color:#000;font-weight:normal;">RM100</div><div class="t" style="left:1772.10px;width:79.00px;text-align:right;top:154px;font-size:12px;line-height:20px;color:#000;font-weight:normal;">RM100</div><div class="t" style="left:731.50px;top:176px;font-size:12.2px;line-height:20px;color:#000;font-weight:normal;">Loan</div><svg style="left:708px;top:174px" width="22" height="22" viewBox="0 0 22 22"><path d="M3.8 8.6L10.5 4L17.2 8.6V10.2H3.8Z" fill="#111"/><ellipse cx="10.5" cy="7" rx="0.8" ry="1.2" fill="#fff"/><path d="M4.3 10h1.4v6H4.3zM6.6 10h1.2v6H6.6zM13.2 10h1.2v6h-1.2zM15.3 10h1.4v6h-1.4z" fill="#111"/><path d="M8.6 10.6h3.8v5.6h-1V12h-1.8v4.2h-1z" fill="#111"/><rect x="9.8" y="12.4" width="1.4" height="3.8" fill="#111"/><rect x="3.6" y="15.9" width="13.6" height="1.4" fill="#111"/></svg><div class="t" style="left:1377.10px;width:79.00px;text-align:right;top:176px;font-size:12px;line-height:20px;color:#000;font-weight:normal;">RM100</div><div class="t" style="left:1456.10px;width:79.00px;text-align:right;top:176px;font-size:12px;line-height:20px;color:#000;font-weight:normal;">RM50</div><div class="t" style="left:1535.10px;width:79.00px;text-align:right;top:176px;font-size:12px;line-height:20px;color:#000;font-weight:normal;">RM110</div><div class="t" style="left:1614.10px;width:79.00px;text-align:right;top:176px;font-size:12px;line-height:20px;color:#000;font-weight:normal;">RM200</div><div class="t" style="left:1693.10px;width:79.00px;text-align:right;top:176px;font-size:12px;line-height:20px;color:#000;font-weight:normal;">RM60</div><div class="t" style="left:1772.10px;width:79.00px;text-align:right;top:176px;font-size:12px;line-height:20px;color:#000;font-weight:normal;">RM520</div><div class="t" style="left:731.50px;top:198px;font-size:12.2px;line-height:20px;color:#000;font-weight:normal;">Fixed</div><svg style="left:708px;top:196px" width="22" height="22" viewBox="0 0 22 22"><path d="M8.3 4.3h4.2l-1.1 2.6H9.4z" fill="none" stroke="#111" stroke-width="1"/><path d="M9.2 7.2C5.5 7.8 4.5 10.5 4.5 13c0 2.8 1.3 4.5 3 4.5h5.2c1.7 0 3-1.7 3-4.5 0-2.5-1-5.2-4.7-5.8z" fill="none" stroke="#111" stroke-width="1.1"/><path d="M11.4 10.8c-0.3-0.6-2.2-0.7-2.2 0.3s2.4 0.8 2.4 1.9-2 1.1-2.4 0.4M10.4 9.9v5" fill="none" stroke="#333" stroke-width="0.6"/></svg><div class="t" style="left:1535.10px;width:79.00px;text-align:right;top:198px;font-size:12px;line-height:20px;color:#000;font-weight:normal;">RM3,882</div><div class="t" style="left:1614.10px;width:79.00px;text-align:right;top:198px;font-size:12px;line-height:20px;color:#000;font-weight:normal;">RM3,506</div><div class="t" style="left:1693.10px;width:79.00px;text-align:right;top:198px;font-size:12px;line-height:20px;color:#000;font-weight:normal;">RM12,229</div><div class="t" style="left:1772.10px;width:79.00px;text-align:right;top:198px;font-size:12px;line-height:20px;color:#000;font-weight:normal;">RM19,617</div><div class="t" style="left:731.50px;top:220px;font-size:12.2px;line-height:20px;color:#000;font-weight:normal;">Banking</div><svg style="left:708px;top:218px" width="22" height="22" viewBox="0 0 22 22"><path d="M10 5.2L12.2 4L17.7 9.3L14.5 12.5L15.8 17.5L13 15.5L10 16.8L4.3 11L7 8.3Z" fill="#111"/><path d="M11.8 5.5L16 9.4L13.5 11.8L12.8 9.6L11.2 8Z" fill="#fff"/><path d="M5.8 11L8 8.8L11.5 12.3L9.3 14.5Z" fill="#fff"/><circle cx="8.6" cy="11.6" r="0.7" fill="#999"/></svg><div class="t" style="left:1535.10px;width:79.00px;text-align:right;top:220px;font-size:12px;line-height:20px;color:#000;font-weight:normal;">RM3,978</div><div class="t" style="left:1614.10px;width:79.00px;text-align:right;top:220px;font-size:12px;line-height:20px;color:#000;font-weight:normal;">RM3,942</div><div class="t" style="left:1693.10px;width:79.00px;text-align:right;top:220px;font-size:12px;line-height:20px;color:#000;font-weight:normal;">RM7,185</div><div class="t" style="left:1772.10px;width:79.00px;text-align:right;top:220px;font-size:12px;line-height:20px;color:#000;font-weight:normal;">RM15,105</div><div class="t" style="left:731.50px;top:242px;font-size:12.2px;line-height:20px;color:#000;font-weight:normal;">Variables</div><svg style="left:708px;top:240px" width="22" height="22" viewBox="0 0 22 22"><rect x="3.6" y="4.1" width="14" height="13.5" rx="1" fill="none" stroke="#111" stroke-width="1"/><path d="M3.6 8.4h14M3.6 13.3h14M7.5 4.1v13.5M13.5 4.1v13.5" stroke="#666" stroke-width="0.6"/><path d="M3.8 15.6L7.5 12.2L9.6 13.3L17.5 5" fill="none" stroke="#111" stroke-width="1"/></svg><div class="t" style="left:824.10px;width:79.00px;text-align:right;top:242px;font-size:12px;line-height:20px;color:#000;font-weight:normal;">RM0</div><div class="t" style="left:903.10px;width:79.00px;text-align:right;top:242px;font-size:12px;line-height:20px;color:#000;font-weight:normal;">RM1</div><div class="t" style="left:982.10px;width:79.00px;text-align:right;top:242px;font-size:12px;line-height:20px;color:#000;font-weight:normal;">RM1</div><div class="t" style="left:1061.10px;width:79.00px;text-align:right;top:242px;font-size:12px;line-height:20px;color:#000;font-weight:normal;">RM5</div><div class="t" style="left:1140.10px;width:79.00px;text-align:right;top:242px;font-size:12px;line-height:20px;color:#000;font-weight:normal;">RM0</div><div class="t" style="left:1219.10px;width:79.00px;text-align:right;top:242px;font-size:12px;line-height:20px;color:#000;font-weight:normal;">RM32</div><div class="t" style="left:1298.10px;width:79.00px;text-align:right;top:242px;font-size:12px;line-height:20px;color:#000;font-weight:normal;">RM110</div><div class="t" style="left:1377.10px;width:79.00px;text-align:right;top:242px;font-size:12px;line-height:20px;color:#000;font-weight:normal;">RM37</div><div class="t" style="left:1456.10px;width:79.00px;text-align:right;top:242px;font-size:12px;line-height:20px;color:#000;font-weight:normal;">RM15</div><div class="t" style="left:1535.10px;width:79.00px;text-align:right;top:242px;font-size:12px;line-height:20px;color:#000;font-weight:normal;">RM1,280</div><div class="t" style="left:1614.10px;width:79.00px;text-align:right;top:242px;font-size:12px;line-height:20px;color:#000;font-weight:normal;">RM1,073</div><div class="t" style="left:1693.10px;width:79.00px;text-align:right;top:242px;font-size:12px;line-height:20px;color:#000;font-weight:normal;">RM586</div><div class="t" style="left:1772.10px;width:79.00px;text-align:right;top:242px;font-size:12px;line-height:20px;color:#000;font-weight:normal;">RM3,141</div><div class="t" style="left:731.50px;top:264px;font-size:12.2px;line-height:20px;color:#000;font-weight:normal;">Transfer</div><svg style="left:708px;top:262px" width="22" height="22" viewBox="0 0 22 22"><rect x="3.6" y="4.1" width="14" height="13.5" rx="1.3" fill="none" stroke="#111" stroke-width="1"/><path d="M8.3 6.8v6.5c0 1 0.6 1.5 1.8 1.5M6.3 8.2h3.4" fill="none" stroke="#111" stroke-width="1.5"/><path d="M11.6 6.8h0.8c0.8 0 1.3 0.6 1.3 1.4v5.5M11.9 12.6l1.8 2 1.8-2" fill="none" stroke="#111" stroke-width="1.5"/></svg><div class="t" style="left:824.10px;width:79.00px;text-align:right;top:264px;font-size:12px;line-height:20px;color:#000;font-weight:normal;">RM99</div><div class="t" style="left:982.10px;width:79.00px;text-align:right;top:264px;font-size:12px;line-height:20px;color:#000;font-weight:normal;">RM15</div><div class="t" style="left:1535.10px;width:79.00px;text-align:right;top:264px;font-size:12px;line-height:20px;color:#000;font-weight:normal;">RM7,519</div><div class="t" style="left:1614.10px;width:79.00px;text-align:right;top:264px;font-size:12px;line-height:20px;color:#000;font-weight:normal;">RM4,122</div><div class="t" style="left:1693.10px;width:79.00px;text-align:right;top:264px;font-size:12px;line-height:20px;color:#000;font-weight:normal;">RM2,368</div><div class="t" style="left:1772.10px;width:79.00px;text-align:right;top:264px;font-size:12px;line-height:20px;color:#000;font-weight:normal;">RM14,122</div><div class="t" style="left:731.50px;top:286px;font-size:12.2px;line-height:20px;color:#000;font-weight:normal;">Gold</div><svg style="left:708px;top:284px" width="22" height="22" viewBox="0 0 22 22"><circle cx="10.5" cy="10.8" r="6.8" fill="none" stroke="#111" stroke-width="1"/><circle cx="10.5" cy="10.8" r="5" fill="#111"/><path d="M7.6 9.5L10.5 7L13.4 9.5V13.4H7.6Z" fill="#fff"/><path d="M8.6 9.4v3.5M10 9.4v3.5M11.4 9.4v3.5M12.6 9.4v3.5" stroke="#555" stroke-width="0.6"/></svg><div class="t" style="left:903.10px;width:79.00px;text-align:right;top:286px;font-size:12px;line-height:20px;color:#000;font-weight:normal;">RM53</div><div class="t" style="left:1614.10px;width:79.00px;text-align:right;top:286px;font-size:12px;line-height:20px;color:#000;font-weight:normal;">RM6,784</div><div class="t" style="left:1693.10px;width:79.00px;text-align:right;top:286px;font-size:12px;line-height:20px;color:#000;font-weight:normal;">RM238</div><div class="t" style="left:1772.10px;width:79.00px;text-align:right;top:286px;font-size:12px;line-height:20px;color:#000;font-weight:normal;">RM7,075</div><div class="t" style="left:701.40px;top:308px;font-size:12px;line-height:20px;color:#000;font-weight:bold;">Income Total</div><div class="t" style="left:824.10px;width:79.00px;text-align:right;top:308px;font-size:12px;line-height:20px;color:#000;font-weight:bold;">RM99</div><div class="t" style="left:903.10px;width:79.00px;text-align:right;top:308px;font-size:12px;line-height:20px;color:#000;font-weight:bold;">RM53</div><div class="t" style="left:982.10px;width:79.00px;text-align:right;top:308px;font-size:12px;line-height:20px;color:#000;font-weight:bold;">RM16</div><div class="t" style="left:1061.10px;width:79.00px;text-align:right;top:308px;font-size:12px;line-height:20px;color:#000;font-weight:bold;">RM5</div><div class="t" style="left:1140.10px;width:79.00px;text-align:right;top:308px;font-size:12px;line-height:20px;color:#000;font-weight:bold;">RM0</div><div class="t" style="left:1219.10px;width:79.00px;text-align:right;top:308px;font-size:12px;line-height:20px;color:#000;font-weight:bold;">RM32</div><div class="t" style="left:1298.10px;width:79.00px;text-align:right;top:308px;font-size:12px;line-height:20px;color:#000;font-weight:bold;">RM110</div><div class="t" style="left:1377.10px;width:79.00px;text-align:right;top:308px;font-size:12px;line-height:20px;color:#000;font-weight:bold;">RM137</div><div class="t" style="left:1456.10px;width:79.00px;text-align:right;top:308px;font-size:12px;line-height:20px;color:#000;font-weight:bold;">RM65</div><div class="t" style="left:1535.10px;width:79.00px;text-align:right;top:308px;font-size:12px;line-height:20px;color:#000;font-weight:bold;">RM16,769</div><div class="t" style="left:1614.10px;width:79.00px;text-align:right;top:308px;font-size:12px;line-height:20px;color:#000;font-weight:bold;">RM19,626</div><div class="t" style="left:1693.10px;width:79.00px;text-align:right;top:308px;font-size:12px;line-height:20px;color:#000;font-weight:bold;">RM22,767</div><div class="t" style="left:1772.10px;width:79.00px;text-align:right;top:308px;font-size:12px;line-height:20px;color:#000;font-weight:bold;">RM59,680</div><div class="t" style="left:701.40px;top:330px;font-size:12px;line-height:20px;color:#000;font-weight:bold;">Expenses</div><div class="t" style="left:731.50px;top:352px;font-size:12.2px;line-height:20px;color:#000;font-weight:normal;">Dining Out</div><svg style="left:708px;top:350px" width="22" height="22" viewBox="0 0 22 22"><circle cx="10.9" cy="11.2" r="5" fill="none" stroke="#111" stroke-width="0.9"/><circle cx="10.9" cy="11.2" r="3.6" fill="none" stroke="#555" stroke-width="0.5"/><path d="M4.8 4.6v11.5" stroke="#111" stroke-width="1.2"/><path d="M4.3 5h1.4v3.8H4.3z" fill="#111"/><path d="M16.9 4.5v11.6" stroke="#111" stroke-width="1.3"/></svg><div class="t" style="left:824.10px;width:79.00px;text-align:right;top:352px;font-size:12px;line-height:20px;color:#000;font-weight:normal;">-RM208</div><div class="t" style="left:903.10px;width:79.00px;text-align:right;top:352px;font-size:12px;line-height:20px;color:#000;font-weight:normal;">-RM219</div><div class="t" style="left:982.10px;width:79.00px;text-align:right;top:352px;font-size:12px;line-height:20px;color:#000;font-weight:normal;">-RM115</div><div class="t" style="left:1061.10px;width:79.00px;text-align:right;top:352px;font-size:12px;line-height:20px;color:#000;font-weight:normal;">-RM578</div><div class="t" style="left:1140.10px;width:79.00px;text-align:right;top:352px;font-size:12px;line-height:20px;color:#000;font-weight:normal;">-RM143</div><div class="t" style="left:1219.10px;width:79.00px;text-align:right;top:352px;font-size:12px;line-height:20px;color:#000;font-weight:normal;">-RM92</div><div class="t" style="left:1298.10px;width:79.00px;text-align:right;top:352px;font-size:12px;line-height:20px;color:#000;font-weight:normal;">-RM375</div><div class="t" style="left:1377.10px;width:79.00px;text-align:right;top:352px;font-size:12px;line-height:20px;color:#000;font-weight:normal;">-RM547</div><div class="t" style="left:1456.10px;width:79.00px;text-align:right;top:352px;font-size:12px;line-height:20px;color:#000;font-weight:normal;">-RM390</div><div class="t" style="left:1535.10px;width:79.00px;text-align:right;top:352px;font-size:12px;line-height:20px;color:#000;font-weight:normal;">-RM1,230</div><div class="t" style="left:1614.10px;width:79.00px;text-align:right;top:352px;font-size:12px;line-height:20px;color:#000;font-weight:normal;">-RM1,043</div><div class="t" style="left:1693.10px;width:79.00px;text-align:right;top:352px;font-size:12px;line-height:20px;color:#000;font-weight:normal;">-RM967</div><div class="t" style="left:1772.10px;width:79.00px;text-align:right;top:352px;font-size:12px;line-height:20px;color:#000;font-weight:normal;">-RM5,907</div><div class="t" style="left:727.00px;top:374px;font-size:12.2px;line-height:20px;color:#000;font-weight:normal;">Living Expenses</div><svg style="left:708px;top:372px" width="22" height="22" viewBox="0 0 22 22"><path d="M2.5 12.3L10.4 4.3L18.2 11.9" fill="none" stroke="#111" stroke-width="1.4"/><path d="M4.3 2.5v4.3M4.3 10.8v6.2M16.5 10.6v6.4" fill="none" stroke="#111" stroke-width="1.1"/><rect x="7.3" y="10.5" width="3.6" height="6.5" fill="#111"/><rect x="12.3" y="10.5" width="2.4" height="2.4" fill="#111"/><rect x="2.6" y="16.6" width="16" height="1.3" fill="#111"/></svg><div class="t" style="left:824.10px;width:79.00px;text-align:right;top:374px;font-size:12px;line-height:20px;color:#000;font-weight:normal;">-RM167</div><div class="t" style="left:903.10px;width:79.00px;text-align:right;top:374px;font-size:12px;line-height:20px;color:#000;font-weight:normal;">-RM103</div><div class="t" style="left:982.10px;width:79.00px;text-align:right;top:374px;font-size:12px;line-height:20px;color:#000;font-weight:normal;">-RM8</div><div class="t" style="left:1061.10px;width:79.00px;text-align:right;top:374px;font-size:12px;line-height:20px;color:#000;font-weight:normal;">-RM88</div><div class="t" style="left:1219.10px;width:79.00px;text-align:right;top:374px;font-size:12px;line-height:20px;color:#000;font-weight:normal;">-RM430</div><div class="t" style="left:1377.10px;width:79.00px;text-align:right;top:374px;font-size:12px;line-height:20px;color:#000;font-weight:normal;">-RM52</div><div class="t" style="left:1456.10px;width:79.00px;text-align:right;top:374px;font-size:12px;line-height:20px;color:#000;font-weight:normal;">-RM40</div><div class="t" style="left:1535.10px;width:79.00px;text-align:right;top:374px;font-size:12px;line-height:20px;color:#000;font-weight:normal;">-RM2,905</div><div class="t" style="left:1614.10px;width:79.00px;text-align:right;top:374px;font-size:12px;line-height:20px;color:#000;font-weight:normal;">-RM5,343</div><div class="t" style="left:1693.10px;width:79.00px;text-align:right;top:374px;font-size:12px;line-height:20px;color:#000;font-weight:normal;">-RM3,988</div><div class="t" style="left:1772.10px;width:79.00px;text-align:right;top:374px;font-size:12px;line-height:20px;color:#000;font-weight:normal;">-RM13,125</div><div class="t" style="left:731.50px;top:396px;font-size:12.2px;line-height:20px;color:#000;font-weight:normal;">Government</div><svg style="left:708px;top:394px" width="22" height="22" viewBox="0 0 22 22"><path d="M6 4H14.5V7H17.7V17.7H12V15.5H9.3V17.7H3.5V7H6Z" fill="#111"/><rect x="7.9" y="5.4" width="1.3" height="1.2" fill="#fff"/><rect x="7.9" y="8.1" width="1.3" height="1.2" fill="#fff"/><rect x="7.9" y="10.8" width="1.3" height="1.2" fill="#fff"/><rect x="7.9" y="13.5" width="1.3" height="1.2" fill="#fff"/><rect x="11" y="5.4" width="1.3" height="1.2" fill="#fff"/><rect x="11" y="8.1" width="1.3" height="1.2" fill="#fff"/><rect x="11" y="10.8" width="1.3" height="1.2" fill="#fff"/><rect x="11" y="13.5" width="1.3" height="1.2" fill="#fff"/><rect x="4.7" y="8.7" width="0.9" height="1.1" fill="#fff"/><rect x="4.7" y="11.3" width="0.9" height="1.1" fill="#fff"/><rect x="4.7" y="13.9" width="0.9" height="1.1" fill="#fff"/><rect x="15.8" y="8.7" width="0.9" height="1.1" fill="#fff"/><rect x="15.8" y="11.3" width="0.9" height="1.1" fill="#fff"/><rect x="15.8" y="13.9" width="0.9" height="1.1" fill="#fff"/></svg><div class="t" style="left:1614.10px;width:79.00px;text-align:right;top:396px;font-size:12px;line-height:20px;color:#000;font-weight:normal;">-RM1,385</div><div class="t" style="left:1693.10px;width:79.00px;text-align:right;top:396px;font-size:12px;line-height:20px;color:#000;font-weight:normal;">-RM910</div><div class="t" style="left:1772.10px;width:79.00px;text-align:right;top:396px;font-size:12px;line-height:20px;color:#000;font-weight:normal;">-RM2,295</div><div class="t" style="left:731.50px;top:418px;font-size:12.2px;line-height:20px;color:#000;font-weight:normal;">Loan</div><svg style="left:708px;top:416px" width="22" height="22" viewBox="0 0 22 22"><path d="M3.8 8.6L10.5 4L17.2 8.6V10.2H3.8Z" fill="#111"/><ellipse cx="10.5" cy="7" rx="0.8" ry="1.2" fill="#fff"/><path d="M4.3 10h1.4v6H4.3zM6.6 10h1.2v6H6.6zM13.2 10h1.2v6h-1.2zM15.3 10h1.4v6h-1.4z" fill="#111"/><path d="M8.6 10.6h3.8v5.6h-1V12h-1.8v4.2h-1z" fill="#111"/><rect x="9.8" y="12.4" width="1.4" height="3.8" fill="#111"/><rect x="3.6" y="15.9" width="13.6" height="1.4" fill="#111"/></svg><div class="t" style="left:824.10px;width:79.00px;text-align:right;top:418px;font-size:12px;line-height:20px;color:#000;font-weight:normal;">-RM150</div><div class="t" style="left:903.10px;width:79.00px;text-align:right;top:418px;font-size:12px;line-height:20px;color:#000;font-weight:normal;">-RM80</div><div class="t" style="left:982.10px;width:79.00px;text-align:right;top:418px;font-size:12px;line-height:20px;color:#000;font-weight:normal;">-RM10</div><div class="t" style="left:1061.10px;width:79.00px;text-align:right;top:418px;font-size:12px;line-height:20px;color:#000;font-weight:normal;">-RM100</div><div class="t" style="left:1140.10px;width:79.00px;text-align:right;top:418px;font-size:12px;line-height:20px;color:#000;font-weight:normal;">-RM83</div><div class="t" style="left:1219.10px;width:79.00px;text-align:right;top:418px;font-size:12px;line-height:20px;color:#000;font-weight:normal;">-RM50</div><div class="t" style="left:1298.10px;width:79.00px;text-align:right;top:418px;font-size:12px;line-height:20px;color:#000;font-weight:normal;">-RM200</div><div class="t" style="left:1377.10px;width:79.00px;text-align:right;top:418px;font-size:12px;line-height:20px;color:#000;font-weight:normal;">-RM100</div><div class="t" style="left:1456.10px;width:79.00px;text-align:right;top:418px;font-size:12px;line-height:20px;color:#000;font-weight:normal;">-RM320</div><div class="t" style="left:1535.10px;width:79.00px;text-align:right;top:418px;font-size:12px;line-height:20px;color:#000;font-weight:normal;">-RM230</div><div class="t" style="left:1614.10px;width:79.00px;text-align:right;top:418px;font-size:12px;line-height:20px;color:#000;font-weight:normal;">-RM280</div><div class="t" style="left:1693.10px;width:79.00px;text-align:right;top:418px;font-size:12px;line-height:20px;color:#000;font-weight:normal;">-RM110</div><div class="t" style="left:1772.10px;width:79.00px;text-align:right;top:418px;font-size:12px;line-height:20px;color:#000;font-weight:normal;">-RM1,713</div><div class="t" style="left:731.50px;top:440px;font-size:12.2px;line-height:20px;color:#000;font-weight:normal;">Discretionary</div><svg style="left:708px;top:438px" width="22" height="22" viewBox="0 0 22 22"><rect x="3.6" y="8.4" width="14" height="9.3" rx="0.7" fill="none" stroke="#111" stroke-width="1"/><path d="M3.6 11.2h14" stroke="#111" stroke-width="1.1"/><path d="M5.4 13.9h9.3" stroke="#111" stroke-width="1.4" stroke-linecap="round"/></svg><div class="t" style="left:824.10px;width:79.00px;text-align:right;top:440px;font-size:12px;line-height:20px;color:#000;font-weight:normal;">-RM261</div><div class="t" style="left:903.10px;width:79.00px;text-align:right;top:440px;font-size:12px;line-height:20px;color:#000;font-weight:normal;">-RM436</div><div class="t" style="left:982.10px;width:79.00px;text-align:right;top:440px;font-size:12px;line-height:20px;color:#000;font-weight:normal;">-RM183</div><div class="t" style="left:1061.10px;width:79.00px;text-align:right;top:440px;font-size:12px;line-height:20px;color:#000;font-weight:normal;">-RM421</div><div class="t" style="left:1140.10px;width:79.00px;text-align:right;top:440px;font-size:12px;line-height:20px;color:#000;font-weight:normal;">-RM116</div><div class="t" style="left:1219.10px;width:79.00px;text-align:right;top:440px;font-size:12px;line-height:20px;color:#000;font-weight:normal;">-RM157</div><div class="t" style="left:1298.10px;width:79.00px;text-align:right;top:440px;font-size:12px;line-height:20px;color:#000;font-weight:normal;">-RM283</div><div class="t" style="left:1377.10px;width:79.00px;text-align:right;top:440px;font-size:12px;line-height:20px;color:#000;font-weight:normal;">-RM7,363</div><div class="t" style="left:1456.10px;width:79.00px;text-align:right;top:440px;font-size:12px;line-height:20px;color:#000;font-weight:normal;">-RM13,337</div><div class="t" style="left:1535.10px;width:79.00px;text-align:right;top:440px;font-size:12px;line-height:20px;color:#000;font-weight:normal;">-RM3,012</div><div class="t" style="left:1614.10px;width:79.00px;text-align:right;top:440px;font-size:12px;line-height:20px;color:#000;font-weight:normal;">-RM2,655</div><div class="t" style="left:1693.10px;width:79.00px;text-align:right;top:440px;font-size:12px;line-height:20px;color:#000;font-weight:normal;">-RM1,920</div><div class="t" style="left:1772.10px;width:79.00px;text-align:right;top:440px;font-size:12px;line-height:20px;color:#000;font-weight:normal;">-RM30,144</div><div class="t" style="left:731.50px;top:462px;font-size:12.2px;line-height:20px;color:#000;font-weight:normal;">Banking</div><svg style="left:708px;top:460px" width="22" height="22" viewBox="0 0 22 22"><path d="M10 5.2L12.2 4L17.7 9.3L14.5 12.5L15.8 17.5L13 15.5L10 16.8L4.3 11L7 8.3Z" fill="#111"/><path d="M11.8 5.5L16 9.4L13.5 11.8L12.8 9.6L11.2 8Z" fill="#fff"/><path d="M5.8 11L8 8.8L11.5 12.3L9.3 14.5Z" fill="#fff"/><circle cx="8.6" cy="11.6" r="0.7" fill="#999"/></svg><div class="t" style="left:903.10px;width:79.00px;text-align:right;top:462px;font-size:12px;line-height:20px;color:#000;font-weight:normal;">-RM1</div><div class="t" style="left:1377.10px;width:79.00px;text-align:right;top:462px;font-size:12px;line-height:20px;color:#000;font-weight:normal;">-RM1</div><div class="t" style="left:1456.10px;width:79.00px;text-align:right;top:462px;font-size:12px;line-height:20px;color:#000;font-weight:normal;">-RM15</div><div class="t" style="left:1535.10px;width:79.00px;text-align:right;top:462px;font-size:12px;line-height:20px;color:#000;font-weight:normal;">-RM4,603</div><div class="t" style="left:1614.10px;width:79.00px;text-align:right;top:462px;font-size:12px;line-height:20px;color:#000;font-weight:normal;">-RM3,942</div><div class="t" style="left:1693.10px;width:79.00px;text-align:right;top:462px;font-size:12px;line-height:20px;color:#000;font-weight:normal;">-RM7,195</div><div class="t" style="left:1772.10px;width:79.00px;text-align:right;top:462px;font-size:12px;line-height:20px;color:#000;font-weight:normal;">-RM15,757</div><div class="t" style="left:731.50px;top:484px;font-size:12.2px;line-height:20px;color:#000;font-weight:normal;">Transfer</div><svg style="left:708px;top:482px" width="22" height="22" viewBox="0 0 22 22"><rect x="3.6" y="4.1" width="14" height="13.5" rx="1.3" fill="none" stroke="#111" stroke-width="1"/><path d="M8.3 6.8v6.5c0 1 0.6 1.5 1.8 1.5M6.3 8.2h3.4" fill="none" stroke="#111" stroke-width="1.5"/><path d="M11.6 6.8h0.8c0.8 0 1.3 0.6 1.3 1.4v5.5M11.9 12.6l1.8 2 1.8-2" fill="none" stroke="#111" stroke-width="1.5"/></svg><div class="t" style="left:903.10px;width:79.00px;text-align:right;top:484px;font-size:12px;line-height:20px;color:#000;font-weight:normal;">-RM200</div><div class="t" style="left:1061.10px;width:79.00px;text-align:right;top:484px;font-size:12px;line-height:20px;color:#000;font-weight:normal;">-RM220</div><div class="t" style="left:1140.10px;width:79.00px;text-align:right;top:484px;font-size:12px;line-height:20px;color:#000;font-weight:normal;">-RM152</div><div class="t" style="left:1535.10px;width:79.00px;text-align:right;top:484px;font-size:12px;line-height:20px;color:#000;font-weight:normal;">-RM600</div><div class="t" style="left:1614.10px;width:79.00px;text-align:right;top:484px;font-size:12px;line-height:20px;color:#000;font-weight:normal;">-RM2,517</div><div class="t" style="left:1693.10px;width:79.00px;text-align:right;top:484px;font-size:12px;line-height:20px;color:#000;font-weight:normal;">-RM2,222</div><div class="t" style="left:1772.10px;width:79.00px;text-align:right;top:484px;font-size:12px;line-height:20px;color:#000;font-weight:normal;">-RM5,911</div><div class="t" style="left:731.50px;top:506px;font-size:12.2px;line-height:20px;color:#000;font-weight:normal;">Transportation</div><svg style="left:708px;top:504px" width="22" height="22" viewBox="0 0 22 22"><path d="M3.6 15.6V12.6L5.4 11.3L7.6 7.8H16.5L17.6 11V15.6Z" fill="none" stroke="#111" stroke-width="1"/><path d="M7.4 8.5H16.2L16.9 11.4H6Z" fill="#111"/><path d="M10.9 8v3.4M14.3 8v3.4" stroke="#fff" stroke-width="0.8"/><path d="M3.8 15.3H17.6" stroke="#111" stroke-width="1.1"/><circle cx="6.8" cy="15.6" r="1.2" fill="#fff" stroke="#111" stroke-width="0.9"/><circle cx="14.5" cy="15.6" r="1.2" fill="#fff" stroke="#111" stroke-width="0.9"/></svg><div class="t" style="left:824.10px;width:79.00px;text-align:right;top:506px;font-size:12px;line-height:20px;color:#000;font-weight:normal;">-RM245</div><div class="t" style="left:903.10px;width:79.00px;text-align:right;top:506px;font-size:12px;line-height:20px;color:#000;font-weight:normal;">-RM48</div><div class="t" style="left:982.10px;width:79.00px;text-align:right;top:506px;font-size:12px;line-height:20px;color:#000;font-weight:normal;">-RM79</div><div class="t" style="left:1061.10px;width:79.00px;text-align:right;top:506px;font-size:12px;line-height:20px;color:#000;font-weight:normal;">-RM12</div><div class="t" style="left:1140.10px;width:79.00px;text-align:right;top:506px;font-size:12px;line-height:20px;color:#000;font-weight:normal;">-RM79</div><div class="t" style="left:1219.10px;width:79.00px;text-align:right;top:506px;font-size:12px;line-height:20px;color:#000;font-weight:normal;">-RM107</div><div class="t" style="left:1298.10px;width:79.00px;text-align:right;top:506px;font-size:12px;line-height:20px;color:#000;font-weight:normal;">-RM108</div><div class="t" style="left:1377.10px;width:79.00px;text-align:right;top:506px;font-size:12px;line-height:20px;color:#000;font-weight:normal;">-RM21</div><div class="t" style="left:1456.10px;width:79.00px;text-align:right;top:506px;font-size:12px;line-height:20px;color:#000;font-weight:normal;">-RM547</div><div class="t" style="left:1535.10px;width:79.00px;text-align:right;top:506px;font-size:12px;line-height:20px;color:#000;font-weight:normal;">-RM838</div><div class="t" style="left:1614.10px;width:79.00px;text-align:right;top:506px;font-size:12px;line-height:20px;color:#000;font-weight:normal;">-RM493</div><div class="t" style="left:1693.10px;width:79.00px;text-align:right;top:506px;font-size:12px;line-height:20px;color:#000;font-weight:normal;">-RM936</div><div class="t" style="left:1772.10px;width:79.00px;text-align:right;top:506px;font-size:12px;line-height:20px;color:#000;font-weight:normal;">-RM3,513</div><div class="t" style="left:731.50px;top:528px;font-size:12.2px;line-height:20px;color:#000;font-weight:normal;">Vacation</div><svg style="left:708px;top:526px" width="22" height="22" viewBox="0 0 22 22"><path d="M4 8.2L6.2 9.5L8.3 10.6L16.8 5L17.5 5.6L12.7 9.5L11.6 13.6L10.6 13.8L11.3 9.9L6.4 11.3Z" fill="#111"/><path d="M7 6.3L10.3 8" stroke="#111" stroke-width="1.1"/><rect x="3.4" y="15" width="14.3" height="2.8" fill="#111"/><path d="M4.5 16.4h12.2" stroke="#ddd" stroke-width="0.6" stroke-dasharray="1.6 1.2"/></svg><div class="t" style="left:1535.10px;width:79.00px;text-align:right;top:528px;font-size:12px;line-height:20px;color:#000;font-weight:normal;">-RM2,614</div><div class="t" style="left:1693.10px;width:79.00px;text-align:right;top:528px;font-size:12px;line-height:20px;color:#000;font-weight:normal;">-RM1,735</div><div class="t" style="left:1772.10px;width:79.00px;text-align:right;top:528px;font-size:12px;line-height:20px;color:#000;font-weight:normal;">-RM4,349</div><div class="t" style="left:731.50px;top:550px;font-size:12.2px;line-height:20px;color:#000;font-weight:normal;">Health Care</div><svg style="left:708px;top:548px" width="22" height="22" viewBox="0 0 22 22"><path d="M4.8 4.8C4 5.2 4 6 4 8.5c0 2 1.2 3.2 3 3.2s3-1.2 3-3.2c0-2.5 0-3.3-0.8-3.7" fill="none" stroke="#111" stroke-width="1"/><path d="M7 11.7v3.5c0 1.5 0.9 2.3 2 2.3s2-0.8 2-2.3v-2c0-1.2 0.7-1.8 1.7-1.8s1.6 0.6 2 1.7" fill="none" stroke="#111" stroke-width="1"/><circle cx="16" cy="14" r="0.9" fill="#333"/></svg><div class="t" style="left:903.10px;width:79.00px;text-align:right;top:550px;font-size:12px;line-height:20px;color:#000;font-weight:normal;">-RM15</div><div class="t" style="left:1535.10px;width:79.00px;text-align:right;top:550px;font-size:12px;line-height:20px;color:#000;font-weight:normal;">-RM161</div><div class="t" style="left:1614.10px;width:79.00px;text-align:right;top:550px;font-size:12px;line-height:20px;color:#000;font-weight:normal;">-RM1,508</div><div class="t" style="left:1693.10px;width:79.00px;text-align:right;top:550px;font-size:12px;line-height:20px;color:#000;font-weight:normal;">-RM934</div><div class="t" style="left:1772.10px;width:79.00px;text-align:right;top:550px;font-size:12px;line-height:20px;color:#000;font-weight:normal;">-RM2,618</div><div class="t" style="left:731.50px;top:572px;font-size:12.2px;line-height:20px;color:#000;font-weight:normal;">Gold</div><svg style="left:708px;top:570px" width="22" height="22" viewBox="0 0 22 22"><circle cx="10.5" cy="10.8" r="6.8" fill="none" stroke="#111" stroke-width="1"/><circle cx="10.5" cy="10.8" r="5" fill="#111"/><path d="M7.6 9.5L10.5 7L13.4 9.5V13.4H7.6Z" fill="#fff"/><path d="M8.6 9.4v3.5M10 9.4v3.5M11.4 9.4v3.5M12.6 9.4v3.5" stroke="#555" stroke-width="0.6"/></svg><div class="t" style="left:982.10px;width:79.00px;text-align:right;top:572px;font-size:12px;line-height:20px;color:#000;font-weight:normal;">-RM50</div><div class="t" style="left:1219.10px;width:79.00px;text-align:right;top:572px;font-size:12px;line-height:20px;color:#000;font-weight:normal;">-RM50</div><div class="t" style="left:1377.10px;width:79.00px;text-align:right;top:572px;font-size:12px;line-height:20px;color:#000;font-weight:normal;">-RM100</div><div class="t" style="left:1535.10px;width:79.00px;text-align:right;top:572px;font-size:12px;line-height:20px;color:#000;font-weight:normal;">-RM470</div><div class="t" style="left:1693.10px;width:79.00px;text-align:right;top:572px;font-size:12px;line-height:20px;color:#000;font-weight:normal;">-RM5,260</div><div class="t" style="left:1772.10px;width:79.00px;text-align:right;top:572px;font-size:12px;line-height:20px;color:#000;font-weight:normal;">-RM5,930</div><div class="t" style="left:731.50px;top:594px;font-size:12.2px;line-height:20px;color:#000;font-weight:normal;">Security</div><svg style="left:708px;top:592px" width="22" height="22" viewBox="0 0 22 22"><rect x="3.6" y="9" width="14" height="8.8" rx="0.6" fill="#111"/><path d="M5.3 13.5V10.8h2.8v2.7" fill="none" stroke="#ddd" stroke-width="0.8"/><path d="M10 10.6h5.8M10 12.9h5.8M9.8 16h6" stroke="#bbb" stroke-width="1"/></svg><div class="t" style="left:1377.10px;width:79.00px;text-align:right;top:594px;font-size:12px;line-height:20px;color:#000;font-weight:normal;">-RM2,390</div><div class="t" style="left:1535.10px;width:79.00px;text-align:right;top:594px;font-size:12px;line-height:20px;color:#000;font-weight:normal;">-RM65</div><div class="t" style="left:1614.10px;width:79.00px;text-align:right;top:594px;font-size:12px;line-height:20px;color:#000;font-weight:normal;">-RM65</div><div class="t" style="left:1693.10px;width:79.00px;text-align:right;top:594px;font-size:12px;line-height:20px;color:#000;font-weight:normal;">-RM65</div><div class="t" style="left:1772.10px;width:79.00px;text-align:right;top:594px;font-size:12px;line-height:20px;color:#000;font-weight:normal;">-RM2,585</div><div class="t" style="left:731.50px;top:616px;font-size:12.2px;line-height:20px;color:#000;font-weight:normal;">Charity</div><svg style="left:708px;top:614px" width="22" height="22" viewBox="0 0 22 22"><path d="M9 6.5C10.5 5 12 4.6 12.6 5.6c0.6 1-1.4 2.4-1.8 2.8h3c0.8 0 1.2 0.6 1.2 1.1 0 0.5-0.4 1-1.2 1h0.8c0.7 0 1.1 0.5 1.1 1s-0.4 1-1.1 1h-0.5c0.6 0 1 0.5 1 1s-0.4 1-1.1 1H7.3C5 14.5 3.6 13 3.6 11c0-2.3 2-3.8 5.4-4.5z" fill="none" stroke="#111" stroke-width="1"/><path d="M12 10.4h2.8M12 12.4h3M11.4 14.3h2.6" stroke="#111" stroke-width="0.8"/></svg><div class="t" style="left:824.10px;width:79.00px;text-align:right;top:616px;font-size:12px;line-height:20px;color:#000;font-weight:normal;">-RM23</div><div class="t" style="left:903.10px;width:79.00px;text-align:right;top:616px;font-size:12px;line-height:20px;color:#000;font-weight:normal;">-RM58</div><div class="t" style="left:982.10px;width:79.00px;text-align:right;top:616px;font-size:12px;line-height:20px;color:#000;font-weight:normal;">-RM23</div><div class="t" style="left:1061.10px;width:79.00px;text-align:right;top:616px;font-size:12px;line-height:20px;color:#000;font-weight:normal;">-RM23</div><div class="t" style="left:1140.10px;width:79.00px;text-align:right;top:616px;font-size:12px;line-height:20px;color:#000;font-weight:normal;">-RM23</div><div class="t" style="left:1219.10px;width:79.00px;text-align:right;top:616px;font-size:12px;line-height:20px;color:#000;font-weight:normal;">-RM23</div><div class="t" style="left:1298.10px;width:79.00px;text-align:right;top:616px;font-size:12px;line-height:20px;color:#000;font-weight:normal;">-RM23</div><div class="t" style="left:1377.10px;width:79.00px;text-align:right;top:616px;font-size:12px;line-height:20px;color:#000;font-weight:normal;">-RM35</div><div class="t" style="left:1456.10px;width:79.00px;text-align:right;top:616px;font-size:12px;line-height:20px;color:#000;font-weight:normal;">-RM35</div><div class="t" style="left:1614.10px;width:79.00px;text-align:right;top:616px;font-size:12px;line-height:20px;color:#000;font-weight:normal;">-RM35</div><div class="t" style="left:1693.10px;width:79.00px;text-align:right;top:616px;font-size:12px;line-height:20px;color:#000;font-weight:normal;">-RM35</div><div class="t" style="left:1772.10px;width:79.00px;text-align:right;top:616px;font-size:12px;line-height:20px;color:#000;font-weight:normal;">-RM336</div><div class="t" style="left:701.40px;top:638px;font-size:12px;line-height:20px;color:#000;font-weight:bold;">Expenses Total</div><div class="t" style="left:824.10px;width:79.00px;text-align:right;top:638px;font-size:12px;line-height:20px;color:#000;font-weight:bold;">-RM1,054</div><div class="t" style="left:903.10px;width:79.00px;text-align:right;top:638px;font-size:12px;line-height:20px;color:#000;font-weight:bold;">-RM1,160</div><div class="t" style="left:982.10px;width:79.00px;text-align:right;top:638px;font-size:12px;line-height:20px;color:#000;font-weight:bold;">-RM469</div><div class="t" style="left:1061.10px;width:79.00px;text-align:right;top:638px;font-size:12px;line-height:20px;color:#000;font-weight:bold;">-RM1,443</div><div class="t" style="left:1140.10px;width:79.00px;text-align:right;top:638px;font-size:12px;line-height:20px;color:#000;font-weight:bold;">-RM596</div><div class="t" style="left:1219.10px;width:79.00px;text-align:right;top:638px;font-size:12px;line-height:20px;color:#000;font-weight:bold;">-RM910</div><div class="t" style="left:1298.10px;width:79.00px;text-align:right;top:638px;font-size:12px;line-height:20px;color:#000;font-weight:bold;">-RM989</div><div class="t" style="left:1377.10px;width:79.00px;text-align:right;top:638px;font-size:12px;line-height:20px;color:#000;font-weight:bold;">-RM10,609</div><div class="t" style="left:1456.10px;width:79.00px;text-align:right;top:638px;font-size:12px;line-height:20px;color:#000;font-weight:bold;">-RM14,683</div><div class="t" style="left:1535.10px;width:79.00px;text-align:right;top:638px;font-size:12px;line-height:20px;color:#000;font-weight:bold;">-RM16,727</div><div class="t" style="left:1614.10px;width:79.00px;text-align:right;top:638px;font-size:12px;line-height:20px;color:#000;font-weight:bold;">-RM19,266</div><div class="t" style="left:1693.10px;width:79.00px;text-align:right;top:638px;font-size:12px;line-height:20px;color:#000;font-weight:bold;">-RM26,277</div><div class="t" style="left:1772.10px;width:79.00px;text-align:right;top:638px;font-size:12px;line-height:20px;color:#000;font-weight:bold;">-RM94,182</div><div class="t" style="left:701.40px;top:660px;font-size:12px;line-height:20px;color:#000;font-weight:bold;">Grand Total</div><div class="t" style="left:824.10px;width:79.00px;text-align:right;top:660px;font-size:12px;line-height:20px;color:#000;font-weight:bold;">-RM954</div><div class="t" style="left:903.10px;width:79.00px;text-align:right;top:660px;font-size:12px;line-height:20px;color:#000;font-weight:bold;">-RM1,107</div><div class="t" style="left:982.10px;width:79.00px;text-align:right;top:660px;font-size:12px;line-height:20px;color:#000;font-weight:bold;">-RM453</div><div class="t" style="left:1061.10px;width:79.00px;text-align:right;top:660px;font-size:12px;line-height:20px;color:#000;font-weight:bold;">-RM1,438</div><div class="t" style="left:1140.10px;width:79.00px;text-align:right;top:660px;font-size:12px;line-height:20px;color:#000;font-weight:bold;">-RM596</div><div class="t" style="left:1219.10px;width:79.00px;text-align:right;top:660px;font-size:12px;line-height:20px;color:#000;font-weight:bold;">-RM877</div><div class="t" style="left:1298.10px;width:79.00px;text-align:right;top:660px;font-size:12px;line-height:20px;color:#000;font-weight:bold;">-RM879</div><div class="t" style="left:1377.10px;width:79.00px;text-align:right;top:660px;font-size:12px;line-height:20px;color:#000;font-weight:bold;">-RM10,472</div><div class="t" style="left:1456.10px;width:79.00px;text-align:right;top:660px;font-size:12px;line-height:20px;color:#000;font-weight:bold;">-RM14,618</div><div class="t" style="left:1535.10px;width:79.00px;text-align:right;top:660px;font-size:12px;line-height:20px;color:#000;font-weight:bold;">RM42</div><div class="t" style="left:1614.10px;width:79.00px;text-align:right;top:660px;font-size:12px;line-height:20px;color:#000;font-weight:bold;">RM361</div><div class="t" style="left:1693.10px;width:79.00px;text-align:right;top:660px;font-size:12px;line-height:20px;color:#000;font-weight:bold;">-RM3,510</div><div class="t" style="left:1772.10px;width:79.00px;text-align:right;top:660px;font-size:12px;line-height:20px;color:#000;font-weight:bold;">-RM34,502</div><svg style="left:26px;top:618px" width="12" height="17" viewBox="0 0 12 17"><path d="M8.6 5.2C8.2 3.4 3.6 3.3 3.7 5.5c0.1 2.3 4.9 1.8 5 4.3c0.1 2.4-4.6 2.4-5.2 0.4M6.2 2v2M6.2 12.3v2.2" fill="none" stroke="#4DCB7E" stroke-width="1.9" stroke-linecap="round"/></svg><svg style="left:155px;top:635px" width="14" height="15" viewBox="0 0 14 15"><rect x="1" y="8" width="11.3" height="6" rx="1" fill="#2E9BF0"/><rect x="8.5" y="5.5" width="3.8" height="3" fill="#2E9BF0"/><path d="M8.8 5.6h4.6v2.2H8.8z" fill="#FFC83D"/><rect x="2" y="1" width="7.2" height="8.8" rx="3" fill="#FFC83D"/><path d="M2 2.5h7.2V4H2z" fill="#F4B000"/><circle cx="4" cy="5.5" r="0.8" fill="#C8D0E8"/><circle cx="7.2" cy="5.5" r="0.8" fill="#C8D0E8"/><path d="M5 7.6h1.3v1H5z" fill="#C84A2E"/></svg><svg style="left:269px;top:544px" width="14" height="16" viewBox="0 0 14 16"><ellipse cx="7" cy="3.3" rx="2.8" ry="1.7" fill="#1C8BE8"/><circle cx="7" cy="10" r="4" fill="none" stroke="#C7A6DE" stroke-width="1.9"/></svg><svg style="left:396px;top:545px" width="15" height="15" viewBox="0 0 15 15"><path d="M1.3 7c0-3.4 2.7-6 6.2-6s6.2 2.6 6.2 6z" fill="#EDEAF2"/><path d="M1 7.2h13c0 3.6-2.6 6.6-6.5 6.6S1 10.8 1 7.2z" fill="#E2265A"/><path d="M1 7.2h13v1H1z" fill="#C81E4E"/></svg><svg style="left:269px;top:635px" width="14" height="15" viewBox="0 0 14 15"><path d="M4.5 0.8l2 2M9.5 0.8l-2 2" stroke="#B9A7A0" stroke-width="0.8"/><rect x="1" y="2.8" width="12" height="9" rx="0.8" fill="#D9C9D3"/><rect x="2.3" y="4" width="7.3" height="6.6" fill="#3B4A6B"/><rect x="2.9" y="4.5" width="6.2" height="5.5" fill="#55C6F5"/><circle cx="11.3" cy="5.8" r="0.8" fill="#E05070"/><path d="M2.3 11.8h1.6v1.8H2.3zM10.1 11.8h1.6v1.8h-1.6z" fill="#4A2E5E"/></svg><svg style="left:584px;top:584px" width="13" height="15" viewBox="0 0 13 15"><rect x="1" y="0" width="8" height="13" rx="0.6" fill="#E8304A"/><rect x="1.8" y="1" width="6.4" height="3.8" fill="#D8E0F0"/><path d="M1.8 1h6.4v1H1.8z" fill="#4A3A66"/><path d="M1 6.3h8v0.7H1z" fill="#D8B8C8"/><path d="M9 3h1.3v9.5H9z" fill="#6A5050"/><rect x="0" y="13" width="10" height="1.3" fill="#C8C8E0"/></svg><svg style="left:584px;top:609.5px" width="13" height="15" viewBox="0 0 13 15"><rect x="1" y="0" width="8" height="13" rx="0.6" fill="#E8304A"/><rect x="1.8" y="1" width="6.4" height="3.8" fill="#D8E0F0"/><path d="M1.8 1h6.4v1H1.8z" fill="#4A3A66"/><path d="M1 6.3h8v0.7H1z" fill="#D8B8C8"/><path d="M9 3h1.3v9.5H9z" fill="#6A5050"/><rect x="0" y="13" width="10" height="1.3" fill="#C8C8E0"/></svg>
</body></html>
